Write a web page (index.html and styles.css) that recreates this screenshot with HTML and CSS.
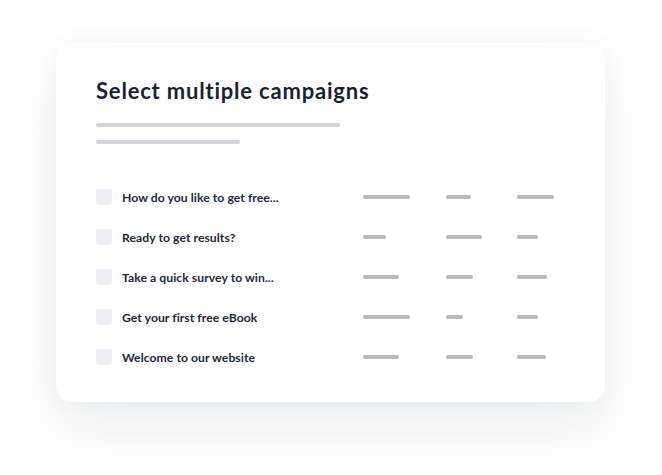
FILE: index.html
```html
<!DOCTYPE html>
<html lang="en">

<head>
    <meta charset="UTF-8">
    <meta name="viewport" content="width=device-width, initial-scale=1.0">
    <title>Select multiple campaigns</title>
    <link rel="stylesheet" href="styles.css">
</head>

<body>
    <div class="card">
        <h1 class="card_title">Select multiple campaigns</h1>
        <div class="line line_long"></div>
        <div class="line line_short"></div>

        <ul class="list">
            <li class="row">
                <span class="check"></span>
                <span class="name">How do you like to get free...</span>
                <span class="cell"><i class="bar" style="width: 47px"></i></span>
                <span class="cell"><i class="bar" style="width: 25px"></i></span>
                <span class="cell"><i class="bar" style="width: 37px"></i></span>
            </li>
            <li class="row">
                <span class="check"></span>
                <span class="name">Ready to get results?</span>
                <span class="cell"><i class="bar" style="width: 23px"></i></span>
                <span class="cell"><i class="bar" style="width: 36px"></i></span>
                <span class="cell"><i class="bar" style="width: 21px"></i></span>
            </li>
            <li class="row">
                <span class="check"></span>
                <span class="name">Take a quick survey to win...</span>
                <span class="cell"><i class="bar" style="width: 36px"></i></span>
                <span class="cell"><i class="bar" style="width: 27px"></i></span>
                <span class="cell"><i class="bar" style="width: 30px"></i></span>
            </li>
            <li class="row">
                <span class="check"></span>
                <span class="name">Get your first free eBook</span>
                <span class="cell"><i class="bar" style="width: 47px"></i></span>
                <span class="cell"><i class="bar" style="width: 17px"></i></span>
                <span class="cell"><i class="bar" style="width: 21px"></i></span>
            </li>
            <li class="row">
                <span class="check"></span>
                <span class="name">Welcome to our website</span>
                <span class="cell"><i class="bar" style="width: 36px"></i></span>
                <span class="cell"><i class="bar" style="width: 27px"></i></span>
                <span class="cell"><i class="bar" style="width: 29px"></i></span>
            </li>
        </ul>
    </div>
</body>

</html>
```

FILE: styles.css
```css
* {
    margin: 0px;
    padding: 0px;
    box-sizing: border-box;
}

html,
body {
    min-height: 475px;
}

body {
    background-color: #ffffff;
    font-family: Lato, "Liberation Sans", sans-serif;
    color: #1b2032;
    padding-top: 43px;
}
/*
 * 卡片
 */

.card {
    width: 549px;
    height: 359px;
    margin-left: 56px;
    padding: 34px 40px 0 40px;
    background-color: #ffffff;
    border-radius: 16px;
    box-shadow: 0 26px 56px rgba(20, 24, 40, 0.075), 0 0 24px rgba(20, 24, 40, 0.03);
}

.card_title {
    font-size: 22px;
    font-weight: 700;
    line-height: 28px;
    letter-spacing: 0.8px;
    color: #1a1f33;
}
/*
 * 标题下的灰线
 */

.line {
    height: 4px;
    border-radius: 4px;
    background-color: #d3d4d9;
}

.line_long {
    width: 244px;
    margin-top: 18px;
}

.line_short {
    width: 144px;
    margin-top: 13px;
}
/*
 * 列表
 */

.list {
    list-style: none;
    margin-top: 33px;
}

.row {
    display: grid;
    grid-template-columns: 26px 241px 83px 71px 1fr;
    align-items: center;
    height: 40px;
}

.row .name {
    font-size: 12.2px;
    font-weight: 700;
    letter-spacing: 0.05px;
    color: #23283a;
    white-space: nowrap;
}

.check {
    width: 16px;
    height: 16px;
    border-radius: 3px;
    background-color: #eceef3;
}

.cell {
    display: flex;
}

.bar {
    display: block;
    height: 4px;
    border-radius: 4px;
    background-color: #b9babf;
}
```
